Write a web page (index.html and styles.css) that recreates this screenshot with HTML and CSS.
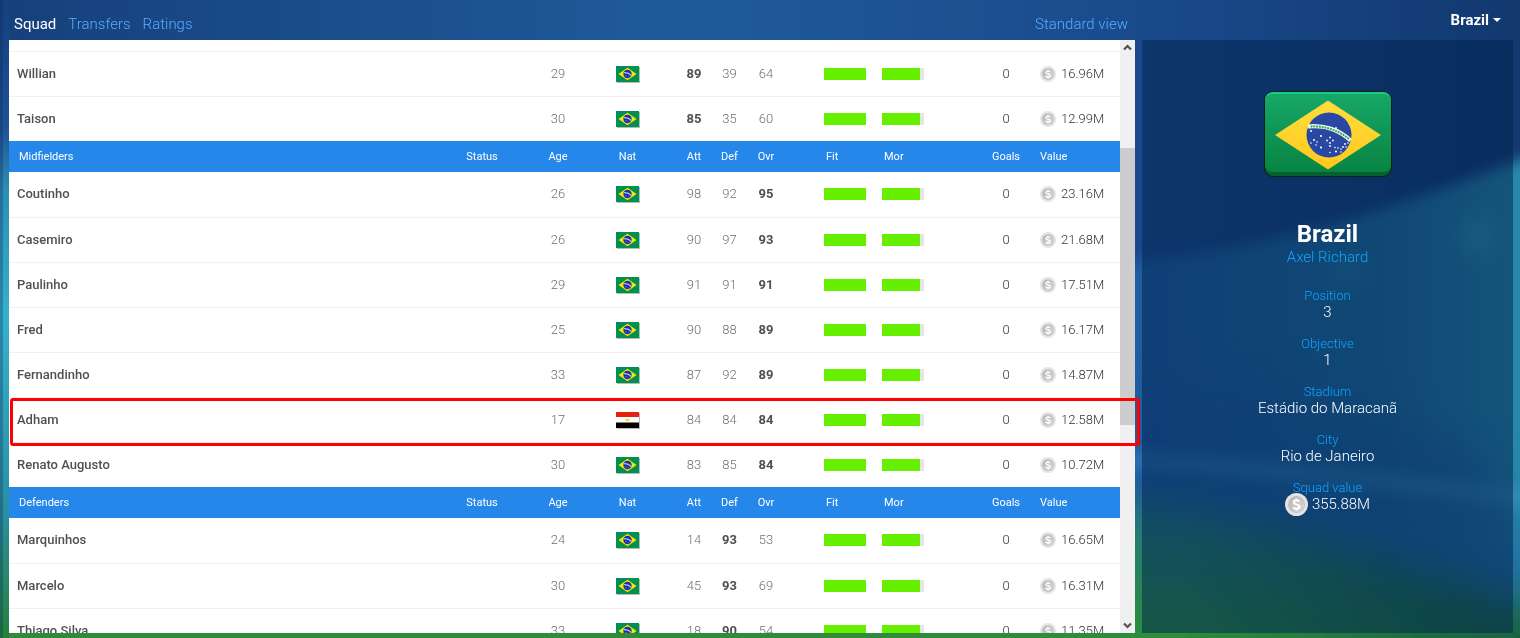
FILE: index.html
```html
<!DOCTYPE html>
<html lang="en">
<head>
<meta charset="utf-8">
<title>Squad - Brazil</title>
<link rel="stylesheet" href="styles.css">
</head>
<body>
<svg class="defs" aria-hidden="true">
  <defs>
    <linearGradient id="coinFill" x1="0" y1="0" x2="1" y2="1"><stop offset="0" stop-color="#b4b4b4"/><stop offset="1" stop-color="#dadada"/></linearGradient>
    <linearGradient id="flagGreen" x1="0" y1="0" x2="0" y2="1"><stop offset="0" stop-color="#17a768"/><stop offset="1" stop-color="#078442"/></linearGradient>
    <linearGradient id="flagYellow" x1="0" y1="0" x2="0" y2="1"><stop offset="0" stop-color="#ffdc3c"/><stop offset="1" stop-color="#ffc91e"/></linearGradient>
  </defs>
  <symbol id="br" viewBox="0 0 24 17">
    <rect x="1" y="1" width="23" height="16" fill="#b9b9b9"/>
    <rect width="23" height="16" fill="#009150"/>
    <path d="M11.500 1.700 20.500 8l-9 6.300L2.500 8z" fill="#fee300"/>
    <circle cx="11.500" cy="8" r="4.200" fill="#1c2fa8"/>
    <path d="M7.700 6.800c3-.4 5.600.6 7.600 2.700" fill="none" stroke="#a9c4e8" stroke-width="1.200"/>
    <path d="M9 9.800h2M12 11h1.500" stroke="#6f86d8" stroke-width=".8"/>
  </symbol>
  <symbol id="eg" viewBox="0 0 24 17">
    <rect x="1" y="1" width="23" height="16" fill="#b9b9b9"/>
    <rect width="23" height="16" fill="#fff"/>
    <rect width="23" height="5" fill="#e8210f"/>
    <rect y="10.500" width="23" height="5.500" fill="#000"/>
    <path d="M9.300 7h4.400v1.500h-1.200v1h-2v-1H9.300z" fill="#f7e014"/>
  </symbol>
  <symbol id="coin" viewBox="0 0 24 24">
    <circle cx="12" cy="12" r="12" fill="#e4e4e4"/>
    <circle cx="12" cy="12" r="8.800" fill="#bcbcbc"/>
    <circle cx="12" cy="12" r="8" fill="url(#coinFill)"/>
    <path d="M15 9.200c-.5-1-1.600-1.500-3-1.500-1.700 0-2.900.7-2.900 2 0 3 6 1.500 6 4.500 0 1.400-1.300 2.200-3.100 2.200-1.600 0-2.800-.6-3.300-1.700M12 5.800v2M12 16.300v2" fill="none" stroke="#fff" stroke-width="2.100"/>
  </symbol>
</svg>
<svg class="backdrop" viewBox="0 0 1520 638" preserveAspectRatio="none" aria-hidden="true">
  <defs>
    <linearGradient id="top" x1="0" y1="0" x2="1" y2="0"><stop offset="0" stop-color="#16407c"/><stop offset=".45" stop-color="#1f5b9b"/><stop offset=".75" stop-color="#1a4a8c"/><stop offset="1" stop-color="#12386f"/></linearGradient>
    <linearGradient id="beam" x1="0" y1="0" x2="1" y2="0"><stop offset="0" stop-color="#2160a4"/><stop offset=".25" stop-color="#2160a4"/><stop offset=".65" stop-color="#24769f"/><stop offset=".95" stop-color="#2f9cb6"/></linearGradient>
    <linearGradient id="edge" x1="0" y1="0" x2="0" y2="1"><stop offset="0" stop-color="#16407c"/><stop offset=".2" stop-color="#1d5296"/><stop offset=".3" stop-color="#2c8fb4"/><stop offset=".5" stop-color="#37b0cc"/><stop offset=".8" stop-color="#2a8fa0"/><stop offset="1" stop-color="#26803a"/></linearGradient>
    <linearGradient id="grass" gradientUnits="userSpaceOnUse" x1="0" y1="500" x2="0" y2="638"><stop offset="0" stop-color="#267c80"/><stop offset=".5" stop-color="#288060"/><stop offset="1" stop-color="#2d8f38"/></linearGradient>
    <linearGradient id="grassShade" gradientUnits="userSpaceOnUse" x1="1180" y1="0" x2="1520" y2="0"><stop offset="0" stop-color="#0c4440" stop-opacity="0"/><stop offset="1" stop-color="#0c4440" stop-opacity=".6"/></linearGradient>
    <filter id="soft" x="-20%" y="-40%" width="140%" height="180%"><feGaussianBlur stdDeviation="20"/></filter>
    <filter id="hazy" x="-20%" y="-40%" width="140%" height="180%"><feGaussianBlur stdDeviation="7"/></filter>
    <filter id="glow" x="-100%" y="-100%" width="300%" height="300%"><feGaussianBlur stdDeviation="12"/></filter>
  </defs>
  <rect width="1520" height="638" fill="url(#top)"/>
  <path d="M1000 276 1142 262C1290 245 1430 200 1600 126V700H1000z" fill="url(#beam)" filter="url(#hazy)" opacity=".9"/>
  <path d="M1080 390C1200 360 1360 390 1480 450L1560 620H1000z" fill="#1c5a9c" opacity=".55" filter="url(#soft)"/>
  <path d="M1000 455C1200 460 1380 480 1560 502" fill="none" stroke="#3f9acc" stroke-width="18" opacity=".4" filter="url(#hazy)"/>
  <circle cx="1478" cy="236" r="14" fill="#4ab4c0" opacity=".6" filter="url(#glow)"/>
  <circle cx="1347" cy="272" r="12" fill="#3f9ac0" opacity=".5" filter="url(#glow)"/>
  <g filter="url(#soft)">
    <path d="M-60 530 1142 505C1280 525 1400 560 1600 630V740H-60z" fill="url(#grass)"/>
    <path d="M1180 510C1290 527 1400 560 1600 630V740H1180z" fill="url(#grassShade)"/>
  </g>
  <rect width="9" height="638" fill="url(#edge)"/>
  <rect width="3" height="638" fill="#0a285a" opacity=".3"/>
</svg>
<div class="page">
  <main class="squad">
    <nav class="tabs">
      <a class="tab current" href="#squad">Squad</a>
      <a class="tab" href="#transfers">Transfers</a>
      <a class="tab" href="#ratings">Ratings</a>
      <a class="tab view" href="#view">Standard view</a>
    </nav>
    <div class="frame">
      <div class="list">
        <table class="players">
          <colgroup><col><col class="c-status"><col class="c-age"><col class="c-nat"><col class="c-att"><col class="c-def"><col class="c-ovr"><col class="c-fit"><col class="c-mor"><col class="c-goals"><col class="c-value"></colgroup>
          <tbody>
            <tr><td class="name">Willian</td><td></td><td>29</td><td><svg class="flag"><use href="#br"/></svg></td><td class="best">89</td><td>39</td><td>64</td><td class="fit"><div class="bar"><div class="fill" style="width:100%"></div></div></td><td class="mor"><div class="bar"><div class="fill" style="width:90%"></div></div></td><td class="goals">0</td><td class="value"><div class="money"><svg class="coin"><use href="#coin"/></svg>16.96M</div></td></tr>
            <tr><td class="name">Taison</td><td></td><td>30</td><td><svg class="flag"><use href="#br"/></svg></td><td class="best">85</td><td>35</td><td>60</td><td class="fit"><div class="bar"><div class="fill" style="width:100%"></div></div></td><td class="mor"><div class="bar"><div class="fill" style="width:90%"></div></div></td><td class="goals">0</td><td class="value"><div class="money"><svg class="coin"><use href="#coin"/></svg>12.99M</div></td></tr>
          </tbody>
          <tbody>
            <tr class="head"><th class="name">Midfielders</th><th>Status</th><th>Age</th><th>Nat</th><th>Att</th><th>Def</th><th>Ovr</th><th class="fit">Fit</th><th class="mor">Mor</th><th>Goals</th><th class="value">Value</th></tr>
            <tr><td class="name">Coutinho</td><td></td><td>26</td><td><svg class="flag"><use href="#br"/></svg></td><td>98</td><td>92</td><td class="best">95</td><td class="fit"><div class="bar"><div class="fill" style="width:100%"></div></div></td><td class="mor"><div class="bar"><div class="fill" style="width:90%"></div></div></td><td class="goals">0</td><td class="value"><div class="money"><svg class="coin"><use href="#coin"/></svg>23.16M</div></td></tr>
            <tr><td class="name">Casemiro</td><td></td><td>26</td><td><svg class="flag"><use href="#br"/></svg></td><td>90</td><td>97</td><td class="best">93</td><td class="fit"><div class="bar"><div class="fill" style="width:100%"></div></div></td><td class="mor"><div class="bar"><div class="fill" style="width:90%"></div></div></td><td class="goals">0</td><td class="value"><div class="money"><svg class="coin"><use href="#coin"/></svg>21.68M</div></td></tr>
            <tr><td class="name">Paulinho</td><td></td><td>29</td><td><svg class="flag"><use href="#br"/></svg></td><td>91</td><td>91</td><td class="best">91</td><td class="fit"><div class="bar"><div class="fill" style="width:100%"></div></div></td><td class="mor"><div class="bar"><div class="fill" style="width:90%"></div></div></td><td class="goals">0</td><td class="value"><div class="money"><svg class="coin"><use href="#coin"/></svg>17.51M</div></td></tr>
            <tr><td class="name">Fred</td><td></td><td>25</td><td><svg class="flag"><use href="#br"/></svg></td><td>90</td><td>88</td><td class="best">89</td><td class="fit"><div class="bar"><div class="fill" style="width:100%"></div></div></td><td class="mor"><div class="bar"><div class="fill" style="width:90%"></div></div></td><td class="goals">0</td><td class="value"><div class="money"><svg class="coin"><use href="#coin"/></svg>16.17M</div></td></tr>
            <tr><td class="name">Fernandinho</td><td></td><td>33</td><td><svg class="flag"><use href="#br"/></svg></td><td>87</td><td>92</td><td class="best">89</td><td class="fit"><div class="bar"><div class="fill" style="width:100%"></div></div></td><td class="mor"><div class="bar"><div class="fill" style="width:90%"></div></div></td><td class="goals">0</td><td class="value"><div class="money"><svg class="coin"><use href="#coin"/></svg>14.87M</div></td></tr>
            <tr><td class="name">Adham</td><td></td><td>17</td><td><svg class="flag"><use href="#eg"/></svg></td><td>84</td><td>84</td><td class="best">84</td><td class="fit"><div class="bar"><div class="fill" style="width:100%"></div></div></td><td class="mor"><div class="bar"><div class="fill" style="width:90%"></div></div></td><td class="goals">0</td><td class="value"><div class="money"><svg class="coin"><use href="#coin"/></svg>12.58M</div></td></tr>
            <tr><td class="name">Renato Augusto</td><td></td><td>30</td><td><svg class="flag"><use href="#br"/></svg></td><td>83</td><td>85</td><td class="best">84</td><td class="fit"><div class="bar"><div class="fill" style="width:100%"></div></div></td><td class="mor"><div class="bar"><div class="fill" style="width:90%"></div></div></td><td class="goals">0</td><td class="value"><div class="money"><svg class="coin"><use href="#coin"/></svg>10.72M</div></td></tr>
          </tbody>
          <tbody>
            <tr class="head"><th class="name">Defenders</th><th>Status</th><th>Age</th><th>Nat</th><th>Att</th><th>Def</th><th>Ovr</th><th class="fit">Fit</th><th class="mor">Mor</th><th>Goals</th><th class="value">Value</th></tr>
            <tr><td class="name">Marquinhos</td><td></td><td>24</td><td><svg class="flag"><use href="#br"/></svg></td><td>14</td><td class="best">93</td><td>53</td><td class="fit"><div class="bar"><div class="fill" style="width:100%"></div></div></td><td class="mor"><div class="bar"><div class="fill" style="width:90%"></div></div></td><td class="goals">0</td><td class="value"><div class="money"><svg class="coin"><use href="#coin"/></svg>16.65M</div></td></tr>
            <tr><td class="name">Marcelo</td><td></td><td>30</td><td><svg class="flag"><use href="#br"/></svg></td><td>45</td><td class="best">93</td><td>69</td><td class="fit"><div class="bar"><div class="fill" style="width:100%"></div></div></td><td class="mor"><div class="bar"><div class="fill" style="width:90%"></div></div></td><td class="goals">0</td><td class="value"><div class="money"><svg class="coin"><use href="#coin"/></svg>16.31M</div></td></tr>
            <tr><td class="name">Thiago Silva</td><td></td><td>33</td><td><svg class="flag"><use href="#br"/></svg></td><td>18</td><td class="best">90</td><td>54</td><td class="fit"><div class="bar"><div class="fill" style="width:100%"></div></div></td><td class="mor"><div class="bar"><div class="fill" style="width:90%"></div></div></td><td class="goals">0</td><td class="value"><div class="money"><svg class="coin"><use href="#coin"/></svg>11.35M</div></td></tr>
          </tbody>
        </table>
      </div>
      <div class="scrollbar">
        <svg class="arrow" viewBox="0 0 15 15"><path d="M4 9.500 7.500 6 11 9.500" fill="none" stroke="#505050" stroke-width="2.200"/></svg>
        <div class="track"><div class="thumb"></div></div>
        <svg class="arrow" viewBox="0 0 15 15"><path d="M4 5.500 7.500 9 11 5.500" fill="none" stroke="#505050" stroke-width="2.200"/></svg>
      </div>
      <div class="marker"></div>
    </div>
  </main>
  <aside class="side">
    <div class="account"><button class="team" type="button">Brazil<span class="caret"></span></button></div>
    <section class="club">
      <svg class="crest" viewBox="0 0 128 86" role="img" aria-label="Brazil flag">
        <rect x="0" y="0" width="128" height="86" rx="9" fill="#04201f"/>
        <rect x="1" y="1" width="126" height="84" rx="8" fill="#055f2e"/>
        <rect x="1" y="1" width="126" height="70" rx="8" fill="#1bca85"/>
        <rect x="1" y="3" width="126" height="78" rx="7" fill="url(#flagGreen)"/>
        <path d="M64 9.500 117 44 64 78.500 11 44z" fill="url(#flagYellow)"/>
        <circle cx="65" cy="44" r="22.500" fill="#2848a4"/>
        <path d="M44 35.500C58.500 34 74.500 38 86.500 49.500" fill="none" stroke="#f2faf0" stroke-width="4.200"/>
        <path d="M46.500 35.500C59.500 34.500 74.500 39 85 48" fill="none" stroke="#37a45c" stroke-width="2" stroke-dasharray="2 .8"/>
        <g fill="#fff"><circle cx="47" cy="40" r="1"/><circle cx="57" cy="45" r="1.100"/><circle cx="50" cy="49" r="1"/><circle cx="47" cy="52" r=".8"/><circle cx="53" cy="51" r=".8"/><circle cx="52" cy="54" r=".8"/><circle cx="57" cy="56.500" r="1.100"/><circle cx="66" cy="46.500" r=".9"/><circle cx="63" cy="49.500" r=".9"/><circle cx="69" cy="49.500" r=".9"/><circle cx="66" cy="52" r=".9"/><circle cx="66" cy="55" r=".9"/><circle cx="66" cy="61.500" r=".8"/><circle cx="72" cy="37" r=".9"/><circle cx="71" cy="56.500" r=".8"/><circle cx="74" cy="57" r=".8"/><circle cx="72" cy="60.500" r="1.100"/><circle cx="77" cy="58" r=".8"/><circle cx="77" cy="61" r=".8"/><circle cx="79" cy="56" r=".9"/><circle cx="81" cy="53" r=".9"/><circle cx="84" cy="52" r=".8"/><circle cx="82" cy="56" r=".8"/></g>
      </svg>
      <h1 class="title">Brazil</h1>
      <a class="manager" href="#manager">Axel Richard</a>
      <dl class="facts">
        <div class="fact"><dt>Position</dt><dd>3</dd></div>
        <div class="fact"><dt>Objective</dt><dd>1</dd></div>
        <div class="fact"><dt>Stadium</dt><dd>Estádio do Maracanã</dd></div>
        <div class="fact"><dt>City</dt><dd>Rio de Janeiro</dd></div>
        <div class="fact"><dt>Squad value</dt><dd class="total"><svg class="coin large"><use href="#coin"/></svg>355.88M</dd></div>
      </dl>
    </section>
  </aside>
</div>
</body>
</html>
```

FILE: styles.css
```css
* { box-sizing: border-box; }
body { margin: 0; background: #16407c; font-family: Roboto, "Liberation Sans", sans-serif; font-size: 13px; }
a { text-decoration: none; }
.defs { position: absolute; width: 0; height: 0; }
.backdrop { position: fixed; inset: 0; width: 100%; height: 100%; }

.page { position: relative; display: flex; gap: 7px; height: 100vh; padding: 0 7px 5px 9px; }
.squad { flex: 1; min-width: 0; display: flex; flex-direction: column; }
.tabs { display: flex; gap: 12px; height: 40px; padding: 8px 7px 0 5px; line-height: 32px; }
.tab { font-size: 15px; font-weight: 300; color: #55acff; }
.current { font-weight: 400; color: #fff; }
.view { margin-left: auto; }

.frame { position: relative; flex: 1; min-height: 0; display: flex; background: #fff; }
.list { flex: 1; overflow: hidden; padding-top: 11px; }
.players { width: 100%; table-layout: fixed; border-collapse: separate; border-spacing: 0; }
.c-status { width: 110px; }
.c-age { width: 42px; }
.c-nat { width: 97px; }
.c-att { width: 36px; }
.c-def { width: 35px; }
.c-ovr { width: 38px; }
.c-fit { width: 89px; }
.c-mor { width: 106px; }
.c-goals { width: 52px; }
.c-value { width: 88px; }
td, th { padding: 0; text-align: center; }
td { height: 45px; border-top: 1px solid #f1f1f1; font-weight: 300; color: #707070; line-height: 16px; }
.head + tr td { border-top-color: #fff; padding-bottom: 2px; }
th { height: 31px; background: #2587ea; color: #fff; font-size: 11px; font-weight: 400; }
td.name { padding-left: 8px; text-align: left; font-weight: 500; color: #505050; }
th.name { padding-left: 10px; text-align: left; }
td.best { font-weight: 700; color: #505050; }
td.goals { color: #333; }
td.fit { padding-left: 39px; }
td.mor { padding-left: 8px; }
th.fit { padding-left: 41px; text-align: left; }
th.mor { padding-left: 10px; text-align: left; }
.value { padding-left: 8px; text-align: left; color: #333; }
th.value { color: #fff; }
.flag { display: block; width: 24px; height: 17px; margin: 0 auto; }
.bar { width: 42px; height: 12px; background: #e6e6e6; }
.fill { height: 100%; background: #66f000; }
.money { display: flex; align-items: center; gap: 5px; }
.coin { width: 16px; height: 16px; }

.scrollbar { display: flex; flex-direction: column; width: 15px; background: #f0f0f0; }
.arrow { width: 15px; height: 15px; }
.track { flex: 1; padding-top: 93px; }
.thumb { height: 277px; background: #cdcdcd; }
.marker { position: absolute; top: 358px; left: 1px; right: -5px; height: 48px; border: 3px solid #f00; border-radius: 3px; pointer-events: none; }

.side { width: 371px; display: flex; flex-direction: column; }
.account { display: flex; justify-content: flex-end; height: 40px; padding-right: 12px; }
.team { display: flex; align-items: center; gap: 4px; padding: 0; border: 0; background: none; color: #fff; font-family: inherit; font-size: 15px; font-weight: 700; }
.caret { border: 4px solid transparent; border-top-color: #fff; border-bottom: 0; }
.club { flex: 1; display: flex; flex-direction: column; align-items: center; padding-top: 51px; background: rgba(0, 34, 78, .5); }
.crest { width: 128px; height: 86px; }
.title { margin: 43px 0 0; font-size: 24px; line-height: 28px; font-weight: 700; color: #fff; }
.manager { font-size: 15px; line-height: 18px; font-weight: 300; color: #0fa5ff; }
.facts { display: flex; flex-direction: column; gap: 15px; margin: 22px 0 0; text-align: center; }
dt { font-size: 13px; line-height: 16px; font-weight: 300; color: #0fa5ff; }
dd { margin: 0; font-size: 15px; line-height: 17px; font-weight: 300; color: #fff; }
.total { display: flex; align-items: center; justify-content: center; gap: 4px; }
.large { width: 23px; height: 23px; margin: -3px 0; }
```
